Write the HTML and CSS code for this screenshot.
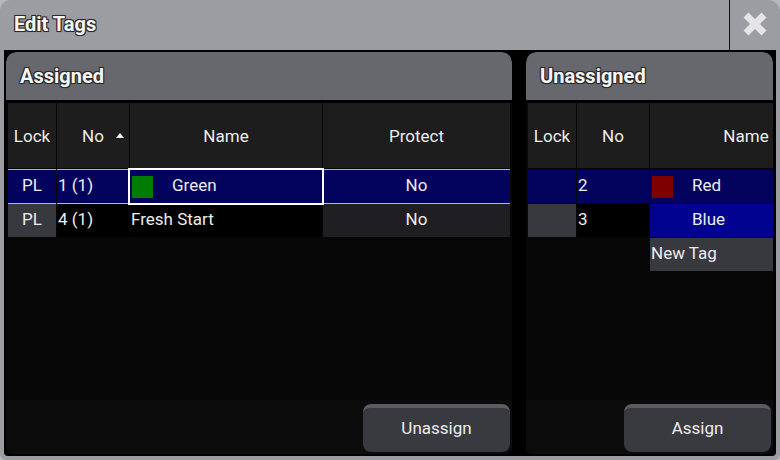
FILE: index.html
```html
<!DOCTYPE html>
<html>
<head>
<meta charset="utf-8">
<title>Edit Tags</title>
<link rel="stylesheet" href="styles.css">
</head>
<body>
<div class="window">
  <div class="titlebar">
    <div class="title">Edit Tags</div>
    <div class="close">
      <svg width="26" height="24" viewBox="0 0 26 24"><path d="M4 3 L22 21 M22 3 L4 21" stroke="#e4e4e4" stroke-width="7" stroke-linecap="butt" fill="none"/></svg>
    </div>
  </div>
  <div class="content">
    <section class="panel left">
      <div class="phead">Assigned</div>
      <div class="tbody">
        <div class="grid head">
          <div class="hc">Lock</div>
          <div class="hc sort">No<span class="tri"></span></div>
          <div class="hc">Name</div>
          <div class="hc">Protect</div>
        </div>
        <div class="grid row">
          <div class="c center sel yl">PL</div>
          <div class="c sel yl">1 (1)</div>
          <div class="c sel focus swcell"><span class="sw green"></span><span class="nt">Green</span></div>
          <div class="c center sel yl">No</div>
        </div>
        <div class="grid row">
          <div class="c center gray">PL</div>
          <div class="c black">4 (1)</div>
          <div class="c black">Fresh Start</div>
          <div class="c center dark">No</div>
        </div>
      </div>
      <div class="pfoot"><div class="btn">Unassign</div></div>
    </section>
    <section class="panel right">
      <div class="phead">Unassigned</div>
      <div class="tbody">
        <div class="grid head">
          <div class="hc">Lock</div>
          <div class="hc">No</div>
          <div class="hc">Name</div>
        </div>
        <div class="grid row">
          <div class="c sel"></div>
          <div class="c sel">2</div>
          <div class="c sel swcell"><span class="sw red"></span><span class="nt">Red</span></div>
        </div>
        <div class="grid row">
          <div class="c gray"></div>
          <div class="c black">3</div>
          <div class="c blue swcell"><span class="sw none"></span><span class="nt">Blue</span></div>
        </div>
        <div class="grid row">
          <div class="c"></div>
          <div class="c"></div>
          <div class="c gray">New Tag</div>
        </div>
      </div>
      <div class="pfoot"><div class="btn">Assign</div></div>
    </section>
  </div>
</div>
</body>
</html>
```

FILE: styles.css
```css
html, body {
  margin: 0;
  padding: 0;
  background: #b8b8bb;
}
body {
  width: 780px;
  height: 460px;
  overflow: hidden;
  font-family: Roboto, "Liberation Sans", sans-serif;
  color: #ececec;
}
.window {
  width: 780px;
  height: 460px;
  background: #9c9da2;
  border-radius: 10px 12px 6px 6px;
  display: flex;
  flex-direction: column;
  overflow: hidden;
}
.titlebar {
  height: 50px;
  display: flex;
  align-items: stretch;
  flex: none;
}
.title {
  flex: 1;
  padding-left: 14px;
  display: flex;
  align-items: center;
  font-size: 20px;
  font-weight: 700;
  color: #f6f6f6;
  padding-bottom: 3px;
  text-shadow: -1px -1px 0 #2a2a2a, 1px -1px 0 #2a2a2a, -1px 1px 0 #2a2a2a, 1px 1px 0 #2a2a2a, 0 0 2px #222;
}
.close {
  width: 50px;
  border-left: 1px solid #111;
  display: flex;
  align-items: center;
  justify-content: center;
  padding-bottom: 2px;
}
.content {
  flex: 1;
  margin: 0 4px 4px 4px;
  background: #000;
  padding: 2px 3px 2px 2px;
  display: flex;
  gap: 14px;
  border-radius: 0 0 4px 4px;
}
.panel {
  display: flex;
  flex-direction: column;
  background: #000;
  border-radius: 10px 10px 6px 6px;
  overflow: hidden;
}
.panel.left { width: 506px; }
.panel.right { width: 247px; }
.phead {
  height: 48px;
  flex: none;
  background: #67686d;
  border-radius: 10px 10px 0 0;
  padding-left: 14px;
  display: flex;
  align-items: center;
  font-size: 20px;
  font-weight: 700;
  color: #f6f6f6;
  text-shadow: -1px -1px 0 #2a2a2a, 1px -1px 0 #2a2a2a, -1px 1px 0 #2a2a2a, 1px 1px 0 #2a2a2a, 0 0 2px #222;
  margin-bottom: 3px;
}
.tbody {
  flex: 1;
  background: #070707;
  padding: 0 2px;
  overflow: hidden;
}
.grid {
  display: grid;
  column-gap: 1px;
  font-size: 17px;
}
.left .grid { grid-template-columns: 48px 72px 192px 187px; }
.right .grid { grid-template-columns: 48px 72px 192px; }
.head {
  height: 65px;
  margin-bottom: 2px;
}
.hc {
  background: #1d1d1d;
  display: flex;
  align-items: center;
  justify-content: center;
  position: relative;
}
.tri {
  position: absolute;
  right: 5px;
  top: 30px;
  width: 0;
  height: 0;
  border-left: 4px solid transparent;
  border-right: 4px solid transparent;
  border-bottom: 5px solid #f0f0f0;
}
.row {
  height: 33px;
  margin-bottom: 1px;
}
.c {
  display: flex;
  align-items: center;
  padding-left: 1px;
  padding-bottom: 4px;
  box-sizing: border-box;
  white-space: nowrap;
}
.c.center {
  justify-content: center;
  padding-left: 0;
}
.sel { background: #03035e; }
.blue { background: #020290; }
.gray { background: #38383f; }
.black { background: #000; }
.dark { background: #1f1f23; }
.yl { box-shadow: 0 -1px 0 #e8c400, 0 1px 0 #e8c400; }
.focus {
  outline: 2px solid #ffffff;
  position: relative;
  z-index: 1;
}
.swcell { padding-left: 2px; }
.sw {
  width: 21px;
  height: 22px;
  flex: none;
  margin-right: 19px;
  margin-top: 4px;
}
.sw.green { background: #007c00; }
.sw.red { background: #7f0000; }
.sw.none { background: transparent; }
.pfoot {
  height: 54px;
  flex: none;
  background: #0c0c0c;
  display: flex;
  justify-content: flex-end;
  align-items: flex-start;
}
.btn {
  width: 147px;
  height: 48px;
  margin: 4px 2px 0 0;
  box-sizing: border-box;
  background: #393940;
  border-top: 4px solid #5b5b61;
  border-radius: 8px;
  display: flex;
  align-items: center;
  justify-content: center;
  font-size: 17px;
  color: #ececec;
  padding-bottom: 4px;
}
```
